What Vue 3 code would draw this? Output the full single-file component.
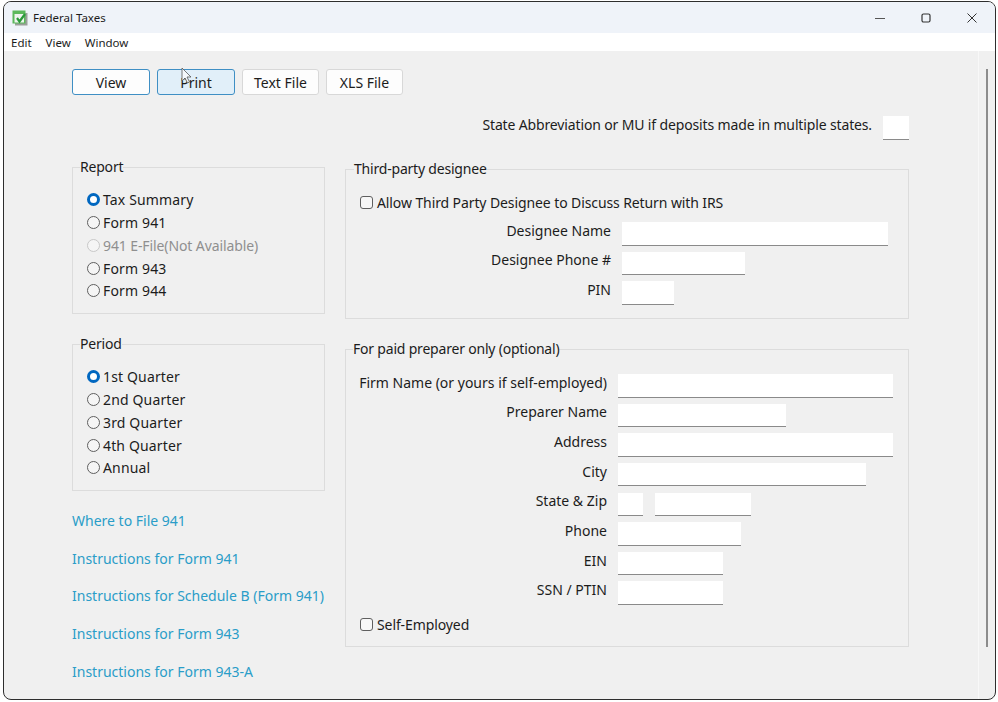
<template>
  <div class="window">
    <header class="titlebar">
      <svg class="app-icon" width="16" height="16" viewBox="0 0 16 16">
        <rect x="3" y="3" width="12.5" height="12.5" fill="#9a9f9a" />
        <rect x="0.5" y="0.5" width="13" height="13" fill="#5bb85b" />
        <rect x="2.5" y="4" width="9.5" height="8.5" fill="#eef3ee" />
        <path d="M5 8l2.5 3.5L13 4" fill="none" stroke="#2a9a3a" stroke-width="2.2" />
      </svg>
      <span class="title">Federal Taxes</span>
      <div class="controls">
        <svg width="12" height="12" viewBox="0 0 12 12"><path d="M1 6.5h10" stroke="#555" fill="none" /></svg>
        <svg width="12" height="12" viewBox="0 0 12 12"><rect x="2" y="2" width="8" height="8" rx="1.5" stroke="#333" stroke-width="1.2" fill="none" /></svg>
        <svg width="12" height="12" viewBox="0 0 12 12"><path d="M1.5 1.5l9 9M10.5 1.5l-9 9" stroke="#333" fill="none" /></svg>
      </div>
    </header>
    <nav class="menubar">
      <span v-for="m in menus" :key="m">{{ m }}</span>
    </nav>
    <div class="body">
      <main class="content">
        <div class="toolbar">
          <button v-for="(b, i) in buttons" :key="b" class="btn" :class="{ 'btn-view': i === 0, 'btn-print': i === 1 }">{{ b }}</button>
          <svg class="cursor" width="12" height="18" viewBox="0 0 12 18">
            <path d="M1 1v13l3-3 2.5 5 2-1-2.5-5h4z" fill="#f4f8fb" stroke="#555" stroke-width="0.8" />
          </svg>
        </div>
        <div class="state-row">
          <span class="state-label">State Abbreviation or MU if deposits made in multiple states.</span>
          <input class="field state-input" type="text" />
        </div>
        <div class="columns">
          <div class="left">
            <fieldset class="group radio-group">
              <legend>Report</legend>
              <label v-for="(r, i) in reports" :key="r.text" class="radio" :class="{ disabled: r.disabled }">
                <input type="radio" name="report" :checked="i === 0" :disabled="r.disabled" />{{ r.text }}
              </label>
            </fieldset>
            <fieldset class="group radio-group period">
              <legend>Period</legend>
              <label v-for="(p, i) in periods" :key="p" class="radio">
                <input type="radio" name="period" :checked="i === 0" />{{ p }}
              </label>
            </fieldset>
            <div class="links">
              <a v-for="l in links" :key="l" href="#">{{ l }}</a>
            </div>
          </div>
          <div class="right">
            <fieldset class="group third">
              <legend>Third-party designee</legend>
              <label class="check"><input type="checkbox" />Allow Third Party Designee to Discuss Return with IRS</label>
              <div class="rows">
                <div v-for="f in designee" :key="f.label" class="row">
                  <span class="row-label">{{ f.label }}</span>
                  <input class="field" type="text" :style="{ width: f.width + 'px' }" />
                </div>
              </div>
            </fieldset>
            <fieldset class="group paid">
              <legend>For paid preparer only (optional)</legend>
              <div class="rows">
                <div v-for="f in preparer" :key="f.label" class="row">
                  <span class="row-label">{{ f.label }}</span>
                  <input v-for="w in f.widths" :key="w" class="field" type="text" :style="{ width: w + 'px' }" />
                </div>
              </div>
              <label class="check self"><input type="checkbox" />Self-Employed</label>
            </fieldset>
          </div>
        </div>
      </main>
      <div class="scrollbar"><div class="thumb"></div></div>
    </div>
  </div>
</template>

<script setup>
const menus = ['Edit', 'View', 'Window']
const buttons = ['View', 'Print', 'Text File', 'XLS File']

const reports = [
  { text: 'Tax Summary' },
  { text: 'Form 941' },
  { text: '941 E-File(Not Available)', disabled: true },
  { text: 'Form 943' },
  { text: 'Form 944' }
]
const periods = ['1st Quarter', '2nd Quarter', '3rd Quarter', '4th Quarter', 'Annual']

const links = [
  'Where to File 941',
  'Instructions for Form 941',
  'Instructions for Schedule B (Form 941)',
  'Instructions for Form 943',
  'Instructions for Form 943-A'
]

const designee = [
  { label: 'Designee Name', width: 266 },
  { label: 'Designee Phone #', width: 123 },
  { label: 'PIN', width: 52 }
]

const preparer = [
  { label: 'Firm Name (or yours if self-employed)', widths: [275] },
  { label: 'Preparer Name', widths: [168] },
  { label: 'Address', widths: [275] },
  { label: 'City', widths: [248] },
  { label: 'State & Zip', widths: [25, 96] },
  { label: 'Phone', widths: [123] },
  { label: 'EIN', widths: [105] },
  { label: 'SSN / PTIN', widths: [105] }
]
</script>

<style>
body {
  background: #fff;
}
</style>

<style scoped>
.window {
  box-sizing: border-box;
  width: 993px;
  height: 699px;
  margin: 1px 0 0 3px;
  border: 1px solid #2e2e2e;
  border-radius: 8px;
  overflow: hidden;
  display: flex;
  flex-direction: column;
  background: #f0f0f0;
  color: #1c1c1c;
  font-family: "Noto Sans", "Liberation Sans", sans-serif;
  font-size: 14px;
}

.titlebar {
  height: 31px;
  flex: none;
  display: flex;
  align-items: center;
  padding-left: 8px;
  background: #eff3f9;
}

.app-icon {
  margin-right: 5px;
}

.title {
  font-size: 11.5px;
}

.controls {
  margin-left: auto;
  display: flex;
  gap: 34px;
  padding-right: 17px;
}

.menubar {
  height: 18px;
  flex: none;
  display: flex;
  align-items: center;
  gap: 14px;
  padding-left: 7px;
  background: #fff;
  font-size: 11.5px;
}

.body {
  flex: 1;
  display: flex;
  min-height: 0;
}

.content {
  flex: 1;
  padding: 18px 0 0 68px;
}

.scrollbar {
  box-sizing: border-box;
  width: 17px;
  flex: none;
  border-left: 1px solid #f8f8f8;
  padding: 18px 0 0 7px;
}

.thumb {
  width: 2px;
  height: 578px;
  background: #8c8c8c;
}

.toolbar {
  position: relative;
  display: flex;
  gap: 7px;
}

.btn {
  box-sizing: border-box;
  width: 77px;
  height: 26px;
  padding: 0;
  border: 1px solid #d8d8d8;
  border-radius: 3px;
  background: #fdfdfd;
  color: #1c1c1c;
  font: inherit;
}

.btn-view {
  width: 78px;
  border-color: #3f8fc4;
}

.btn-print {
  width: 78px;
  border-color: #3f8fc4;
  background: #e1eff9;
}

.cursor {
  position: absolute;
  left: 109px;
  top: -2px;
}

.state-row {
  display: flex;
  justify-content: flex-end;
  align-items: center;
  gap: 11px;
  width: 837px;
  margin-top: 21px;
}

.state-label {
  letter-spacing: -0.14px;
  margin-bottom: 7px;
  line-height: 16px;
}

.field {
  box-sizing: border-box;
  height: 23.5px;
  padding: 0;
  border: none;
  border-bottom: 1px solid #8a8a8a;
  background: #fff;
  outline: none;
}

.field + .field {
  margin-left: 1px;
}

.state-input {
  width: 26px;
  height: 24px;
}

.columns {
  display: flex;
  gap: 20px;
  margin-top: 17px;
}

.left {
  width: 253px;
  flex: none;
}

.right {
  width: 564px;
  flex: none;
  margin-top: 2px;
}

.group {
  box-sizing: border-box;
  min-width: 0;
  margin: 0;
  border: 1px solid #dcdcdc;
  padding: 0 7px;
}

.group legend {
  padding: 0;
  line-height: 20px;
  letter-spacing: -0.2px;
}

.radio-group {
  height: 157px;
  padding-top: 11.5px;
}

.period {
  margin-top: 20px;
}

.radio {
  display: flex;
  align-items: center;
  height: 22.75px;
  margin-left: 7px;
  letter-spacing: 0.15px;
}

.radio.disabled {
  color: #8f8f8f;
  letter-spacing: -0.1px;
}

.radio input {
  appearance: none;
  box-sizing: border-box;
  width: 13px;
  height: 13px;
  margin: 0 3px 0 0;
  flex: none;
  border: 1px solid #5f5f5f;
  border-radius: 50%;
  background: #f5f5f5;
}

.radio input:checked {
  border: 3.5px solid #0067c0;
  background: #fff;
}

.radio input:disabled {
  border-color: #c8c8c8;
}

.links {
  display: flex;
  flex-direction: column;
  gap: 17.7px;
  margin-top: 20px;
}

.links a {
  line-height: 20px;
  color: #2a9dc8;
  text-decoration: none;
}

.third {
  height: 160px;
  padding: 12px 8px 0;
}

.paid {
  height: 308px;
  margin-top: 20px;
  padding-top: 15px;
}

.check {
  display: flex;
  align-items: center;
  height: 22px;
  margin-left: 7px;
  letter-spacing: -0.1px;
}

.third .check {
  margin-left: 6px;
}

.check input {
  appearance: none;
  box-sizing: border-box;
  width: 13px;
  height: 13px;
  margin: 0 4px 0 0;
  flex: none;
  border: 1px solid #5f5f5f;
  border-radius: 3px;
  background: #f7f7f7;
}

.self {
  margin-top: 9px;
}

.rows {
  display: flex;
  flex-direction: column;
  gap: 6.15px;
}

.third .rows {
  margin-top: 9px;
}

.row {
  display: flex;
  align-items: center;
  gap: 11px;
}

.third .row-label {
  width: 257px;
}

.paid .row-label {
  width: 254px;
}

.row-label {
  flex: none;
  text-align: right;
  line-height: 16px;
  margin-bottom: 6px;
}
</style>
